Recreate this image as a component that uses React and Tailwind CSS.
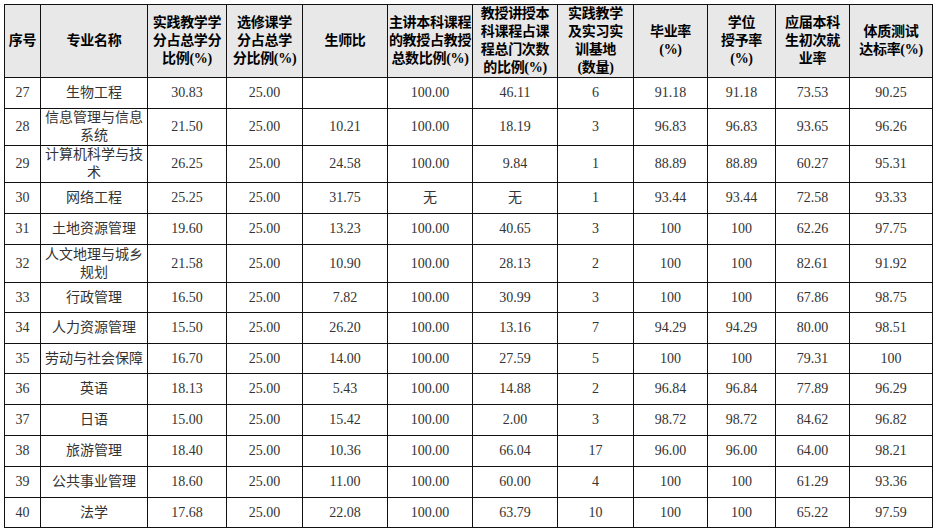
import React from "react";

const rows = [
  ["27", "生物工程", "30.83", "25.00", "", "100.00", "46.11", "6", "91.18", "91.18", "73.53", "90.25", "h-[31px]"],
  ["28", "信息管理与信息系统", "21.50", "25.00", "10.21", "100.00", "18.19", "3", "96.83", "96.83", "93.65", "96.26", "h-[37px]"],
  ["29", "计算机科学与技术", "26.25", "25.00", "24.58", "100.00", "9.84", "1", "88.89", "88.89", "60.27", "95.31", "h-[37px]"],
  ["30", "网络工程", "25.25", "25.00", "31.75", "无", "无", "1", "93.44", "93.44", "72.58", "93.33", "h-[31px]"],
  ["31", "土地资源管理", "19.60", "25.00", "13.23", "100.00", "40.65", "3", "100", "100", "62.26", "97.75", "h-[31px]"],
  ["32", "人文地理与城乡规划", "21.58", "25.00", "10.90", "100.00", "28.13", "2", "100", "100", "82.61", "91.92", "h-[38px]"],
  ["33", "行政管理", "16.50", "25.00", "7.82", "100.00", "30.99", "3", "100", "100", "67.86", "98.75", "h-[30px]"],
  ["34", "人力资源管理", "15.50", "25.00", "26.20", "100.00", "13.16", "7", "94.29", "94.29", "80.00", "98.51", "h-[31px]"],
  ["35", "劳动与社会保障", "16.70", "25.00", "14.00", "100.00", "27.59", "5", "100", "100", "79.31", "100", "h-[30px]"],
  ["36", "英语", "18.13", "25.00", "5.43", "100.00", "14.88", "2", "96.84", "96.84", "77.89", "96.29", "h-[31px]"],
  ["37", "日语", "15.00", "25.00", "15.42", "100.00", "2.00", "3", "98.72", "98.72", "84.62", "96.82", "h-[31px]"],
  ["38", "旅游管理", "18.40", "25.00", "10.36", "100.00", "66.04", "17", "96.00", "96.00", "64.00", "98.21", "h-[31px]"],
  ["39", "公共事业管理", "18.60", "25.00", "11.00", "100.00", "60.00", "4", "100", "100", "61.29", "93.36", "h-[31px]"],
  ["40", "法学", "17.68", "25.00", "22.08", "100.00", "63.79", "10", "100", "100", "65.22", "97.59", "h-[30px]"],
];

const headers = [
  ["序号"],
  ["专业名称"],
  ["实践教学学", "分占总学分", "比例(%)"],
  ["选修课学", "分占总学", "分比例(%)"],
  ["生师比"],
  ["主讲本科课程", "的教授占教授", "总数比例(%)"],
  ["教授讲授本", "科课程占课", "程总门次数", "的比例(%)"],
  ["实践教学", "及实习实", "训基地", "(数量)"],
  ["毕业率", "(%)"],
  ["学位", "授予率", "(%)"],
  ["应届本科", "生初次就", "业率"],
  ["体质测试", "达标率(%)"],
];

const widths = [36, 107, 79, 76, 85, 85, 85, 76, 74, 68, 74, 83];

export default function App() {
  return (
    <div className="w-[937px] h-[531px] bg-white pl-[4px] pt-[4px] font-['Liberation_Serif','Noto_Sans_CJK_SC',serif]">
      <table className="table-fixed border-collapse w-[928px]">
        <colgroup>
          {widths.map((w, i) => (
            <col key={i} style={{ width: w }} />
          ))}
        </colgroup>
        <thead>
          <tr className="h-[73px] bg-[#e8e8e8]">
            {headers.map((lines, i) => (
              <th
                key={i}
                className="border-[1.5px] border-[#111] p-0 text-center align-middle text-[14px] leading-[18px] font-bold text-black tracking-[-0.3px]"
              >
                {lines.map((l, j) => (
                  <div key={j} className="whitespace-nowrap">{l}</div>
                ))}
              </th>
            ))}
          </tr>
        </thead>
        <tbody>
          {rows.map((r) => (
            <tr key={r[0]} className={r[12]}>
              {r.slice(0, 12).map((c, i) => (
                <td
                  key={i}
                  className={
                    "border-[1.5px] border-[#111] text-center align-middle text-[14px] leading-[18px] text-[#333] " +
                    (i === 1 ? "px-[4px] py-0" : "p-0")
                  }
                >
                  {c}
                </td>
              ))}
            </tr>
          ))}
        </tbody>
      </table>
    </div>
  );
}
